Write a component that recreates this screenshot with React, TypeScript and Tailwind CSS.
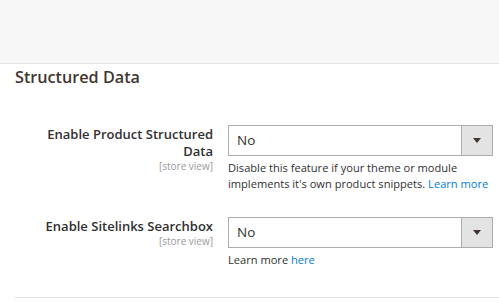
import React from "react";

function Select() {
  return (
    <div className="flex h-[31px] w-[265px] border border-[#adadad] bg-white">
      <div className="flex flex-1 items-center pl-[8px] text-[13.5px] text-[#303030]">No</div>
      <div className="flex w-[31px] items-center justify-center border-l border-[#adadad] bg-[#e3e3e3]">
        <div className="h-0 w-0 border-x-[4px] border-t-[5px] border-x-transparent border-t-[#41362f]" />
      </div>
    </div>
  );
}

export default function App() {
  return (
    <div className="h-[303px] w-[499px] overflow-hidden bg-white" style={{ fontFamily: '"Open Sans", sans-serif' }}>
      <div className="h-[64px] border-b border-[#e3e3e3] bg-[#f7f7f7]" />
      <div className="pl-[15px]">
        <div className="pt-[3px] text-[16.2px] font-semibold leading-[21px] text-[#41362f]">Structured Data</div>
        <div className="mt-[37px] flex">
          <div className="w-[198px] shrink-0 pt-[1px] text-right">
            <div className="pl-[30px] text-[13px] font-semibold leading-[17px] text-[#303030]">Enable Product Structured Data</div>
            <div className="text-[10px] leading-[12px] text-[#999]">[store view]</div>
          </div>
          <div className="ml-[15px]">
            <Select />
            <div className="mt-[4px] w-[270px] text-[11.1px] leading-[16px] text-[#303030]">
              Disable this feature if your theme or module implements it's own product snippets.{" "}
              <span className="text-[#007bdb]">Learn more</span>
            </div>
          </div>
        </div>
        <div className="mt-[25px] flex">
          <div className="w-[198px] shrink-0 pt-[1px] text-right">
            <div className="text-[13px] font-semibold leading-[17px] text-[#303030]">Enable Sitelinks Searchbox</div>
            <div className="text-[10px] leading-[12px] text-[#999]">[store view]</div>
          </div>
          <div className="ml-[15px]">
            <Select />
            <div className="mt-[4px] text-[11.1px] leading-[16px] text-[#303030]">
              Learn more <span className="text-[#007bdb]">here</span>
            </div>
          </div>
        </div>
        <div className="mt-[29px] h-px bg-[#e3e3e3]" />
      </div>
    </div>
  );
}
